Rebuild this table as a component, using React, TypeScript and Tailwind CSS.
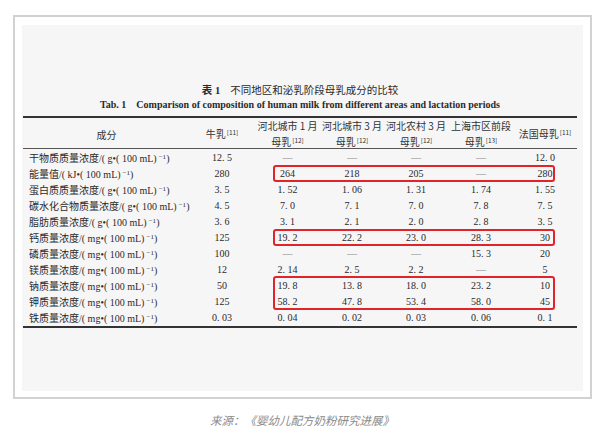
const SERIF = "font-['Liberation_Serif','Noto_Sans_CJK_SC',serif]"

type Row = { name: string; unit: string; values: string[] }

const ROWS: Row[] = [
  { name: '干物质质量浓度', unit: 'g', values: ['12. 5', '—', '—', '—', '—', '12. 0'] },
  { name: '能量值', unit: 'kJ', values: ['280', '264', '218', '205', '—', '280'] },
  { name: '蛋白质质量浓度', unit: 'g', values: ['3. 5', '1. 52', '1. 06', '1. 31', '1. 74', '1. 55'] },
  { name: '碳水化合物质量浓度', unit: 'g', values: ['4. 5', '7. 0', '7. 1', '7. 0', '7. 8', '7. 5'] },
  { name: '脂肪质量浓度', unit: 'g', values: ['3. 6', '3. 1', '2. 1', '2. 0', '2. 8', '3. 5'] },
  { name: '钙质量浓度', unit: 'mg', values: ['125', '19. 2', '22. 2', '23. 0', '28. 3', '30'] },
  { name: '磷质量浓度', unit: 'mg', values: ['100', '—', '—', '—', '15. 3', '20'] },
  { name: '镁质量浓度', unit: 'mg', values: ['12', '2. 14', '2. 5', '2. 2', '—', '5'] },
  { name: '钠质量浓度', unit: 'mg', values: ['50', '19. 8', '13. 8', '18. 0', '23. 2', '10'] },
  { name: '钾质量浓度', unit: 'mg', values: ['125', '58. 2', '47. 8', '53. 4', '58. 0', '45'] },
  { name: '铁质量浓度', unit: 'mg', values: ['0. 03', '0. 04', '0. 02', '0. 03', '0. 06', '0. 1'] },
]

// red highlight boxes: row index -> number of rows covered
const BOXES: Record<number, number> = { 1: 1, 5: 1, 8: 2 }

const GRID = 'grid grid-cols-[167px_64px_67px_62px_66px_64px_64px]'

function Ref({ n }: { n: number }) {
  return <sup className="text-[6.5px] ml-[1px] top-[-0.5em]">[{n}]</sup>
}

function Head({ top, bottom, n }: { top?: string; bottom: string; n: number }) {
  return (
    <div className="flex flex-col items-center justify-center leading-[16px]">
      {top && <span>{top}</span>}
      <span>
        {bottom}
        <Ref n={n} />
      </span>
    </div>
  )
}

export default function App() {
  return (
    <div className="w-[600px] h-[435px] bg-white overflow-hidden">
      <div className="pt-[15px] pl-[13px]">
        <div className="w-[579px] h-[384px] border-2 border-[#d2d2d2] pt-[8px] pl-[7px] pr-[7px]">
          <div className={`h-[366px] bg-[#f6f6f7] pt-[57px] pl-[1px] text-[#2a2a2a] ${SERIF}`}>
            <div className="w-[554px]">
              {/* captions */}
              <div className="h-[15px] leading-[15px] text-center text-[10.5px]">
                <span className="font-bold">表 1</span>
                <span className="ml-[10px] font-['Noto_Sans_CJK_SC',sans-serif]">不同地区和泌乳阶段母乳成分的比较</span>
              </div>
              <div className="h-[15px] leading-[15px] text-center text-[10px] font-bold">
                Tab. 1<span className="ml-[10px]">Comparison of composition of human milk from different areas and lactation periods</span>
              </div>

              <div className="mt-[4px] h-[2px] bg-[#333]" />

              {/* header */}
              <div className={`${GRID} h-[30px] text-[10px] font-['Noto_Sans_CJK_SC',sans-serif] text-[#333]`}>
                <div className="flex items-center justify-center">成分</div>
                <Head bottom="牛乳" n={11} />
                <Head top="河北城市 1 月" bottom="母乳" n={12} />
                <Head top="河北城市 3 月" bottom="母乳" n={12} />
                <Head top="河北农村 3 月" bottom="母乳" n={12} />
                <Head top="上海市区前段" bottom="母乳" n={13} />
                <Head bottom="法国母乳" n={11} />
              </div>
              <div className="h-[1px] bg-[#555]" />

              {/* body */}
              <div className="pt-[1px]">
                {ROWS.map((row, i) => (
                  <div key={row.name} className={`${GRID} relative h-[16px] leading-[16px] text-[10px]`}>
                    <div className="pl-[6px] whitespace-nowrap">
                      <span className="font-['Noto_Sans_CJK_SC',sans-serif]">{row.name}</span>/( {row.unit}•( 100 mL)
                      <sup className="text-[7px] ml-[2px]">−1</sup>)
                    </div>
                    {row.values.map((v, j) => (
                      <div key={j} className={`text-center ${v === '—' ? 'text-[#888]' : ''}`}>
                        {v}
                      </div>
                    ))}
                    {BOXES[i] && (
                      <span
                        className={`absolute left-[250px] w-[282px] border-2 border-[#e0242a] rounded-[3px] pointer-events-none ${
                          BOXES[i] === 2 ? 'top-[-2px] h-[34px]' : 'top-[-1px] h-[17px]'
                        }`}
                      />
                    )}
                  </div>
                ))}
              </div>
              <div className="h-[2px] bg-[#333]" />
            </div>
          </div>
        </div>
      </div>

      <div className="mt-[13px] pl-[4px] text-center text-[11.5px] italic text-[#8a8a8a] font-['Noto_Sans_CJK_SC',sans-serif]">
        来源：《婴幼儿配方奶粉研究进展》
      </div>
    </div>
  )
}
